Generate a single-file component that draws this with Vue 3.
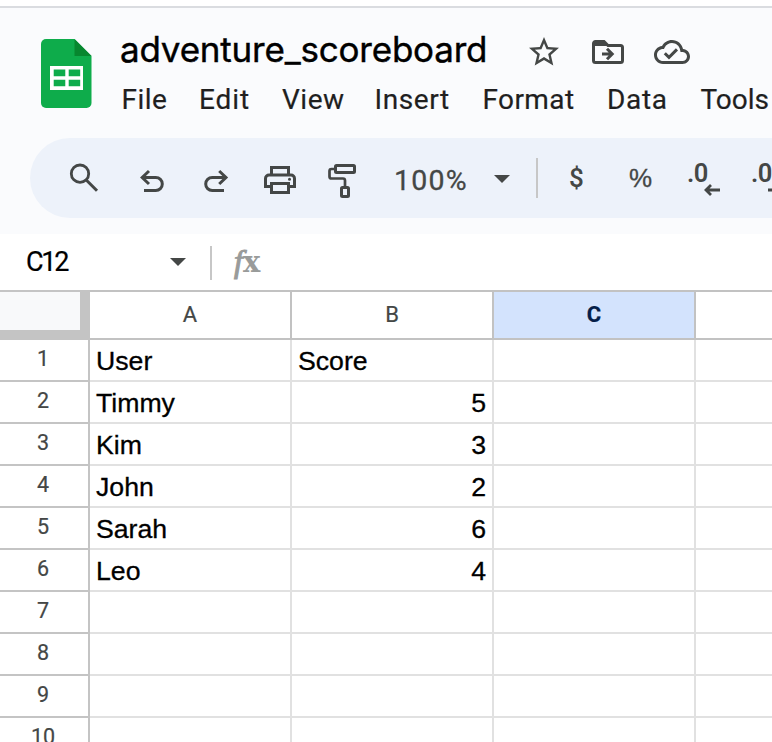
<script setup>
const menus = ['File', 'Edit', 'View', 'Insert', 'Format', 'Data', 'Tools']
const columns = ['A', 'B', 'C', '']
const data = [
  ['User', 'Score'],
  ['Timmy', 5],
  ['Kim', 3],
  ['John', 2],
  ['Sarah', 6],
  ['Leo', 4],
]
const rows = Array.from({ length: 10 }, (_, i) => data[i] || [])
</script>

<template>
  <div class="sheet-app">
    <header class="header">
      <svg class="logo" width="51" height="69" viewBox="0 0 51 69">
        <path d="M5 0H33.5L50.5 17V64a5 5 0 0 1-5 5H5a5 5 0 0 1-5-5V5a5 5 0 0 1 5-5z" fill="#0eac4b" />
        <path d="M33.5 0L50.5 17H33.5z" fill="#07872f" />
        <path fill="#fff" fill-rule="evenodd" d="M9 27H42V51H9zM12.7 30.5V37.3H24.3V30.5zM27.7 30.5V37.3H39.2V30.5zM12.7 40.7V47.3H24.3V40.7zM27.7 40.7V47.3H39.2V40.7z" />
      </svg>
      <div class="heading">
        <div class="title-row">
          <span class="title">adventure_scoreboard</span>
          <svg class="star" width="36" height="36" viewBox="0 0 24 24" fill="#444746">
            <path d="M22 9.24l-7.19-.62L12 2 9.19 8.63 2 9.24l5.46 4.73L5.82 21 12 17.27 18.18 21l-1.63-7.03L22 9.24zM12 15.4l-3.76 2.27 1-4.28-3.32-2.88 4.38-.38L12 6.1l1.71 4.04 4.38.38-3.32 2.88 1 4.28L12 15.4z" />
          </svg>
          <svg class="folder" width="32" height="36" viewBox="0 0 32 36" fill="none" stroke="#444746" stroke-width="3">
            <path d="M1.5 9.5a2 2 0 0 1 2-2H12l4 4H28.5a2 2 0 0 1 2 2V26.5a2 2 0 0 1-2 2H3.5a2 2 0 0 1-2-2z" />
            <path d="M1.5 8H12l4 4H1.5z" fill="#444746" stroke="none" />
            <path d="M10 20H20M15 14.8L20.2 20L15 25.2" />
          </svg>
          <svg class="cloud" width="36" height="36" viewBox="0 0 24 24" fill="#444746">
            <path d="M19.35 10.04C18.67 6.59 15.64 4 12 4 9.11 4 6.6 5.64 5.35 8.04 2.34 8.36 0 10.91 0 14c0 3.31 2.69 6 6 6h13c2.76 0 5-2.24 5-5 0-2.64-2.05-4.78-4.65-4.96zM19 18H6c-2.21 0-4-1.79-4-4 0-2.05 1.53-3.76 3.56-3.97l1.07-.11.5-.95C8.08 7.14 9.94 6 12 6c2.62 0 4.88 1.86 5.39 4.43l.3 1.5 1.53.11c1.56.1 2.78 1.41 2.78 2.96 0 1.65-1.35 3-3 3z" />
            <path d="M10 14.18l-2.09-2.09L6.5 13.5 10 17l6.01-6.01-1.41-1.41z" />
          </svg>
        </div>
        <nav class="menu">
          <span v-for="m in menus" :key="m" :class="'m-' + m.toLowerCase()">{{ m }}</span>
        </nav>
      </div>
    </header>

    <div class="toolbar">
      <svg class="tools" width="330" height="80" viewBox="30 138 330 80" fill="none" stroke="#444746" stroke-width="3">
        <circle cx="80" cy="173.7" r="8.7" stroke-width="2.8" />
        <path d="M86 179.7L97 190.8" />
        <path d="M149 171L142.2 177.5L149 184M142 177.5H155.8a6.5 6.5 0 0 1 0 13H144" />
        <path d="M219.2 171L226 177.5L219.2 184M226 177.5H212.2a6.5 6.5 0 0 0 0 13H224" />
        <path d="M271.5 174.5V167.5H288.5V174.5M271.5 186.5H265.5V178.5a3.5 3.5 0 0 1 3.5-3.5H291a3.5 3.5 0 0 1 3.5 3.5V186.5H288.5M271.5 183.5H288.5V192.5H271.5z" />
        <circle cx="289.5" cy="179.3" r="1.5" fill="#444746" stroke="none" />
        <rect x="335.5" y="165.5" width="19" height="7" rx="1" />
        <path d="M334.5 169H331.5a2 2 0 0 0-2 2V176.5a2 2 0 0 0 2 2H343a2 2 0 0 1 2 2V186" stroke-width="2.7" />
        <rect x="341.5" y="187.5" width="7" height="9" rx="1" />
      </svg>
      <span class="zoom">100%</span>
      <svg class="zoom-caret" width="16" height="8" viewBox="0 0 16 8"><path d="M0 0H16L8 8z" fill="#444746" /></svg>
      <i class="divider"></i>
      <span class="dollar">$</span>
      <span class="percent">%</span>
      <span class="decimal">.0
        <svg class="dec-arrow" width="17" height="12" viewBox="0 0 17 12" fill="none" stroke="#444746" stroke-width="2.8"><path d="M16 6H3M7 1L2 6L7 11" /></svg>
      </span>
      <span class="decimal">.0
        <svg class="dec-arrow" width="17" height="12" viewBox="0 0 17 12" fill="none" stroke="#444746" stroke-width="2.8"><path d="M0 6H14M10 1L15 6L10 11" /></svg>
      </span>
    </div>

    <div class="formula-bar">
      <span class="cell-name">C12</span>
      <svg class="name-caret" width="16" height="8" viewBox="0 0 16 8"><path d="M0 0H16L8 8z" fill="#444746" /></svg>
      <i class="divider"></i>
      <span class="fx"><em>f</em><b>x</b></span>
    </div>

    <div class="grid">
      <div class="corner"></div>
      <div v-for="(c, i) in columns" :key="'c' + i" class="col-head" :class="{ selected: c === 'C' }">{{ c }}</div>
      <template v-for="(row, r) in rows" :key="r">
        <div class="row-head">{{ r + 1 }}</div>
        <div v-for="(c, i) in columns" :key="i" class="cell" :class="{ number: typeof row[i] === 'number' }">{{ row[i] }}</div>
      </template>
    </div>
  </div>
</template>

<style>
body { overflow: hidden; }
</style>

<style scoped>
.sheet-app {
  width: 772px;
  height: 742px;
  overflow: hidden;
  box-sizing: border-box;
  padding-top: 6px;
  background: linear-gradient(#fff 6px, #fafbfd 6px 234px, #fff 234px);
  font-family: Roboto, "Liberation Sans", sans-serif;
  color: #444746;
}
svg { display: block; flex: none; }
.header {
  display: flex;
  height: 130px;
  border-top: 2px solid #dadce0;
  box-sizing: border-box;
}
.logo { margin: 31px 0 0 40.5px; }
.heading { margin-left: 28.5px; white-space: nowrap; }
.title-row { display: flex; height: 62px; padding-top: 26px; box-sizing: border-box; }
.title {
  width: 406px;
  margin-top: -9px;
  font: 400 35px/48px Inter, sans-serif;
  letter-spacing: -0.2px;
  color: #000;
  -webkit-text-stroke: 0.4px #000;
}
.folder { margin-left: 30px; }
.cloud { margin-left: 30px; }
.menu {
  display: flex;
  height: 34px;
  margin: 13px 0 0 1.5px;
  font-size: 28px;
  line-height: 34px;
  letter-spacing: 0.5px;
  color: #1f1f1f;
  -webkit-text-stroke: 0.2px #1f1f1f;
}
.menu span { flex: none; }
.m-file { width: 77.5px; }
.m-edit { width: 83px; letter-spacing: 0.9px; }
.m-view { width: 92.5px; }
.m-insert { width: 108px; letter-spacing: 0.6px; }
.m-format { width: 124.5px; letter-spacing: 0.4px; }
.m-data { width: 93.5px; letter-spacing: 0.7px; }
.m-tools { letter-spacing: 0; }
.toolbar {
  display: flex;
  height: 80px;
  margin: 2px 0 0 30px;
  border-radius: 40px 0 0 40px;
  background: #edf2fa;
}
.toolbar span { flex: none; white-space: nowrap; }
.zoom { width: 103px; margin: 25px 0 0 34px; font-size: 28.5px; line-height: 36px; letter-spacing: 1.2px; -webkit-text-stroke: 0.3px; }
.zoom-caret { margin: 37px 0 0 -3px; }
.divider { flex: none; width: 2px; background: #c7c7c7; }
.toolbar .divider { height: 40px; margin: 20px 0 0 26px; }
.dollar { width: 60px; margin: 24px 0 0 31px; font-size: 26px; line-height: 32px; font-weight: 500; }
.percent { width: 58px; margin-top: 24px; font: 400 26px/32px "Liberation Sans", sans-serif; -webkit-text-stroke: 0.3px; }
.decimal { position: relative; width: 64px; margin-top: 19px; font-size: 25.5px; line-height: 32px; font-weight: 600; letter-spacing: -0.5px; }
.dec-arrow { position: absolute; left: 17px; top: 27px; }
.formula-bar { display: flex; height: 56px; margin-top: 16px; }
.cell-name { width: 144px; margin: 10px 0 0 26px; font-size: 27px; line-height: 36px; letter-spacing: -2.3px; color: #000; -webkit-text-stroke: 0.2px; }
.name-caret { margin-top: 24px; }
.formula-bar .divider { height: 34px; margin: 12px 0 0 24px; }
.fx { display: flex; margin: 9px 0 0 22px; color: #999b9a; }
.fx em { width: 9px; font: italic 400 32px/36px "Liberation Serif", serif; -webkit-text-stroke: 1.1px; }
.fx b { font: 700 29px/39px "DejaVu Serif", serif; }
.grid {
  display: grid;
  grid-template-columns: 90px repeat(4, 202px);
  grid-template-rows: 50px;
  grid-auto-rows: 42px;
}
.grid > div { box-sizing: border-box; border-right: 2px solid #e1e1e1; border-bottom: 2px solid #e1e1e1; }
.grid > .corner {
  background: #f8f9fa;
  border: solid #c4c4c4;
  border-width: 2px 10px 10px 0;
}
.grid > .col-head {
  border: solid #c2c2c2;
  border-width: 2px 2px 2px 0;
  text-align: center;
  font-size: 22px;
  line-height: 46px;
  -webkit-text-stroke: 0.2px;
}
.grid > .selected { background: #d3e3fd; color: #041e49; font-weight: 700; }
.grid > .row-head {
  border-color: #c4c4c4;
  padding-right: 2px;
  text-align: center;
  font-size: 21.5px;
  line-height: 38px;
  -webkit-text-stroke: 0.2px;
}
.cell { padding: 0 6px; font: 26.67px/42px "Liberation Sans", Arial, sans-serif; color: #000; -webkit-text-stroke: 0.3px; }
.cell.number { text-align: right; }
</style>
